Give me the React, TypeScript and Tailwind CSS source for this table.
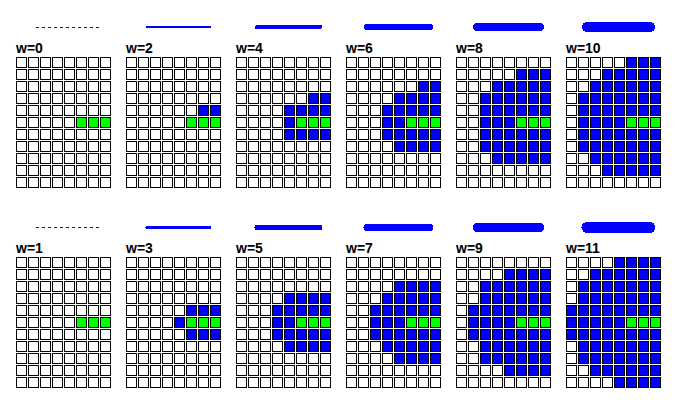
import React from "react";

// start column of the blue run on each of the 11 rows (8 = no blue)
const coverage: Record<number, number[]> = {
  0: [8, 8, 8, 8, 8, 8, 8, 8, 8, 8, 8],
  1: [8, 8, 8, 8, 8, 8, 8, 8, 8, 8, 8],
  2: [8, 8, 8, 8, 6, 8, 8, 8, 8, 8, 8],
  3: [8, 8, 8, 8, 5, 4, 5, 8, 8, 8, 8],
  4: [8, 8, 8, 6, 4, 4, 4, 8, 8, 8, 8],
  5: [8, 8, 8, 4, 3, 3, 3, 4, 8, 8, 8],
  6: [8, 8, 6, 4, 3, 3, 3, 4, 8, 8, 8],
  7: [8, 8, 4, 3, 2, 2, 2, 3, 4, 8, 8],
  8: [8, 5, 3, 2, 2, 2, 2, 2, 3, 8, 8],
  9: [8, 4, 2, 2, 1, 1, 1, 2, 2, 4, 8],
  10: [5, 3, 2, 1, 1, 1, 1, 1, 2, 3, 8],
  11: [4, 2, 1, 1, 0, 0, 0, 1, 1, 2, 4],
};

const rows = [
  [0, 2, 4, 6, 8, 10],
  [1, 3, 5, 7, 9, 11],
];

function Stroke({ w }: { w: number }) {
  return (
    <svg width="95" height="41" className="block" shapeRendering="crispEdges">
      {w < 2 ? (
        <line x1="20" y1="27.5" x2="83" y2="27.5" stroke="#0000ff" strokeWidth="1" strokeDasharray="3 3" />
      ) : (
        <line
          x1="21"
          y1={w % 2 ? 27.5 : 27}
          x2="84"
          y2={w % 2 ? 27.5 : 27}
          stroke="#0000ff"
          strokeWidth={w}
          strokeLinecap="round"
        />
      )}
    </svg>
  );
}

function Cell({ kind }: { kind: "empty" | "blue" | "green" }) {
  const fill = kind === "blue" ? "bg-[#0000ff]" : kind === "green" ? "bg-[#00ff00]" : "bg-white";
  return <div className={`h-[11px] w-[11px] border border-black ${fill}`} />;
}

function Panel({ w }: { w: number }) {
  const starts = coverage[w];
  return (
    <div className="flex w-[95px] flex-col">
      <Stroke w={w} />
      <div className="h-[14px] text-[14px] font-bold leading-[14px] text-black">w={w}</div>
      <div className="mt-[2px] grid grid-cols-[repeat(8,11px)] gap-px">
        {starts.map((start, r) =>
          Array.from({ length: 8 }, (_, c) => {
            const kind = r === 5 && c >= 5 ? "green" : c >= start ? "blue" : "empty";
            return <Cell key={`${r}-${c}`} kind={kind} />;
          })
        )}
      </div>
    </div>
  );
}

export default function App() {
  return (
    <div
      className="h-[411px] w-[677px] overflow-hidden bg-white pl-4"
      style={{ fontFamily: '"Liberation Sans", Arial, sans-serif' }}
    >
      {rows.map((row, i) => (
        <div key={i} className="flex h-[200px] gap-[15px]">
          {row.map((w) => (
            <Panel key={w} w={w} />
          ))}
        </div>
      ))}
    </div>
  );
}
